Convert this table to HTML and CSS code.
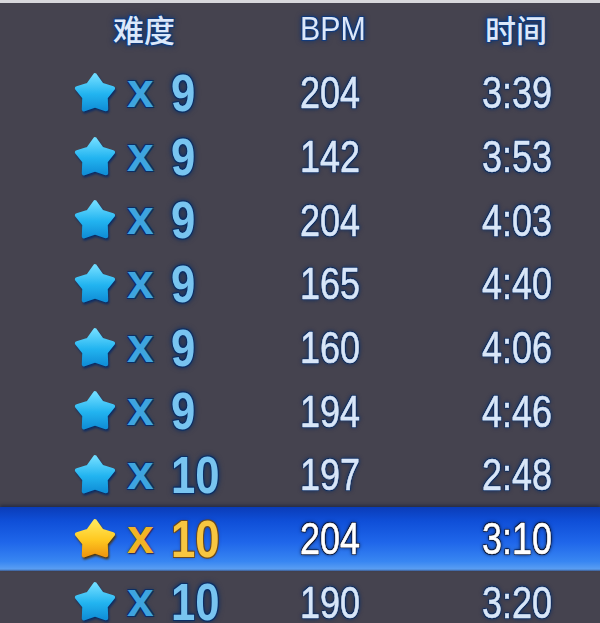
FILE: index.html
```html
<!DOCTYPE html>
<html lang="zh">
<head>
<meta charset="utf-8">
<title>曲目难度</title>
<link rel="stylesheet" href="styles.css">
</head>
<body>
<svg width="0" height="0" class="defs">
  <defs>
    <linearGradient id="gBlue" x1="0" y1="0" x2="0" y2="1">
      <stop offset="0" stop-color="#6fdcff"/>
      <stop offset="0.55" stop-color="#22b4f0"/>
      <stop offset="1" stop-color="#1190d8"/>
    </linearGradient>
    <linearGradient id="gGold" x1="0" y1="0" x2="0" y2="1">
      <stop offset="0" stop-color="#ffe85a"/>
      <stop offset="0.55" stop-color="#ffc820"/>
      <stop offset="1" stop-color="#f09a10"/>
    </linearGradient>
    <symbol id="star" viewBox="0 0 40 40">
      <path d="M20 4 L26 12.6 L36.2 15.7 L29.6 24.1 L30 34.7 L20 31.2 L10 34.7 L10.4 24.1 L3.8 15.7 L14 12.6 Z" stroke-linejoin="round" stroke-width="4"/>
    </symbol>
  </defs>
</svg>
<div class="top-line"></div>
<div class="table">
  <div class="row head">
    <div class="cell diff-head">难度</div>
    <div class="cell bpm-head">BPM</div>
    <div class="cell time-head">时间</div>
  </div>
  <div class="row">
    <div class="cell diff"><svg class="star blue"><use href="#star"/></svg><span class="x">x</span><span class="lvl">9</span></div>
    <div class="cell num">204</div>
    <div class="cell num">3:39</div>
  </div>
  <div class="row">
    <div class="cell diff"><svg class="star blue"><use href="#star"/></svg><span class="x">x</span><span class="lvl">9</span></div>
    <div class="cell num">142</div>
    <div class="cell num">3:53</div>
  </div>
  <div class="row">
    <div class="cell diff"><svg class="star blue"><use href="#star"/></svg><span class="x">x</span><span class="lvl">9</span></div>
    <div class="cell num">204</div>
    <div class="cell num">4:03</div>
  </div>
  <div class="row">
    <div class="cell diff"><svg class="star blue"><use href="#star"/></svg><span class="x">x</span><span class="lvl">9</span></div>
    <div class="cell num">165</div>
    <div class="cell num">4:40</div>
  </div>
  <div class="row">
    <div class="cell diff"><svg class="star blue"><use href="#star"/></svg><span class="x">x</span><span class="lvl">9</span></div>
    <div class="cell num">160</div>
    <div class="cell num">4:06</div>
  </div>
  <div class="row">
    <div class="cell diff"><svg class="star blue"><use href="#star"/></svg><span class="x">x</span><span class="lvl">9</span></div>
    <div class="cell num">194</div>
    <div class="cell num">4:46</div>
  </div>
  <div class="row">
    <div class="cell diff"><svg class="star blue"><use href="#star"/></svg><span class="x">x</span><span class="lvl">10</span></div>
    <div class="cell num">197</div>
    <div class="cell num">2:48</div>
  </div>
  <div class="row selected">
    <div class="cell diff"><svg class="star gold"><use href="#star"/></svg><span class="x">x</span><span class="lvl">10</span></div>
    <div class="cell num">204</div>
    <div class="cell num">3:10</div>
  </div>
  <div class="row">
    <div class="cell diff"><svg class="star blue"><use href="#star"/></svg><span class="x">x</span><span class="lvl">10</span></div>
    <div class="cell num">190</div>
    <div class="cell num">3:20</div>
  </div>
</div>
</body>
</html>
```
FILE: styles.css
```css
html, body {
  margin: 0;
  padding: 0;
}
body {
  width: 600px;
  height: 623px;
  overflow: hidden;
  background: #45434f;
  font-family: "Liberation Sans", Arial, "Noto Sans CJK SC", sans-serif;
}
.defs {
  position: absolute;
  width: 0;
  height: 0;
}
.top-line {
  height: 3px;
  background: #d8d8dc;
}
.table {
  display: flex;
  flex-direction: column;
}
.row {
  display: grid;
  grid-template-columns: 223px 182px 1fr;
  padding-left: 77px;
  height: 63.7px;
  align-items: center;
}
.row.head {
  height: 58px;
  padding-bottom: 8px;
  box-sizing: border-box;
  align-items: center;
}
.head .cell {
  font-size: 32px;
  line-height: 1;
  color: #dce8fa;
  text-shadow:
    1px 1px 0 #123a7a, -1px -1px 0 #123a7a, 1px -1px 0 #123a7a, -1px 1px 0 #123a7a,
    0 0 4px #0e3370, 0 0 7px #0e3370;
}
.diff-head {
  padding-left: 36px;
  font-family: "Noto Sans CJK SC", sans-serif;
  font-size: 31px !important;
  font-weight: 500;
}
.bpm-head {
  transform: scaleX(0.92);
  transform-origin: left center;
  font-size: 33px !important;
}
.time-head {
  padding-left: 3px;
  font-family: "Noto Sans CJK SC", sans-serif;
  font-size: 31px !important;
  font-weight: 500;
}
.cell {
  line-height: 1;
}
.num {
  font-size: 45px;
  color: #d8e6f8;
  transform: scaleX(0.8);
  transform-origin: left center;
  -webkit-text-stroke: 0.6px #d8e6f8;
  text-shadow:
    1px 1px 0 #0b2a5c, -1px -1px 0 #0b2a5c, 1px -1px 0 #0b2a5c, -1px 1px 0 #0b2a5c,
    0 0 4px #0c2e66, 0 0 6px #0c2e66;
}
.diff {
  display: flex;
  align-items: center;
}
.star {
  width: 44px;
  height: 44px;
  margin-left: -4px;
  filter: drop-shadow(1px 2px 1px #0a2b64);
}
.star.blue {
  fill: url(#gBlue);
  stroke: url(#gBlue);
}
.star.gold {
  fill: url(#gGold);
  stroke: url(#gGold);
  filter: drop-shadow(1px 2px 1px #4a3410);
}
.x {
  margin-left: 10px;
  font-size: 48px;
  font-weight: bold;
  line-height: 1;
  color: #3ea4df;
  margin-top: -4px;
  text-shadow:
    1px 1px 0 #0b2e64, -1px -1px 0 #0b2e64, 1px -1px 0 #0b2e64, -1px 1px 0 #0b2e64,
    0 0 4px #0b2e64;
}
.lvl {
  display: inline-block;
  margin-left: 17px;
  font-size: 52px;
  font-weight: bold;
  line-height: 1;
  color: #78c4f0;
  transform: scaleX(0.84);
  transform-origin: left center;
  text-shadow:
    1px 1px 0 #0b2e64, -1px -1px 0 #0b2e64, 1px -1px 0 #0b2e64, -1px 1px 0 #0b2e64,
    0 0 4px #0b2e64, 0 0 7px #0b2e64;
}
.selected {
  background: linear-gradient(to bottom, #0a3cb8 0%, #0f4fd8 22%, #1f66ea 55%, #3886f2 85%, #5a9ef2 97%, #3a5a90 100%);
  box-shadow: 0 -2px 3px rgba(20, 30, 60, 0.6);
}
.selected .num {
  color: #ffffff;
  -webkit-text-stroke: 0.6px #ffffff;
  text-shadow:
    1px 1px 0 #0a1430, -1px -1px 0 #0a1430, 1px -1px 0 #0a1430, -1px 1px 0 #0a1430,
    0 0 3px #0a1430, 0 0 5px #0a1430;
}
.selected .x {
  color: #f2b424;
  text-shadow: 0 0 3px #3a3060, 1px 1px 1px #2a2850;
}
.selected .lvl {
  color: #f8c640;
  text-shadow:
    1px 1px 0 #6a4a20, -1px -1px 0 #6a4a20, 1px -1px 0 #6a4a20, -1px 1px 0 #6a4a20,
    0 0 4px #2a3070;
}
```
